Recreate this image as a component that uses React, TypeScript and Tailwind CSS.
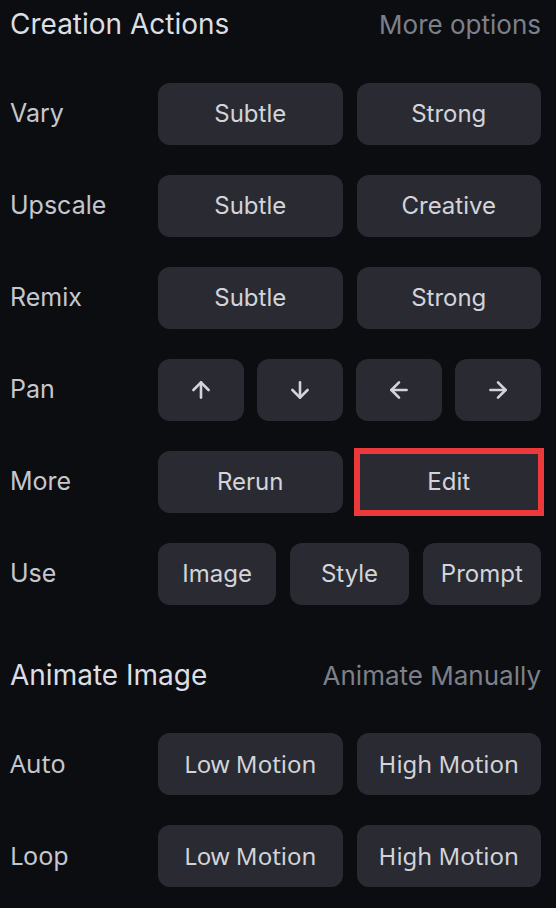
import { ArrowUp, ArrowDown, ArrowLeft, ArrowRight } from 'lucide-react';
import type { ReactNode } from 'react';

const sans = "font-['Inter','Liberation_Sans',sans-serif]";
const noto = "font-['Noto_Sans','Liberation_Sans',sans-serif]";

const Btn = ({ children, className = 'rounded-xl' }: { children: ReactNode; className?: string }) => (
    <button
        className={`h-[62px] flex-1 flex items-center justify-center bg-[#2a2b32] text-[#d2d4da] text-[24px] ${className}`}
    >
        {children}
    </button>
);

const Row = ({ label, children, font = sans }: { label: string; children: ReactNode; font?: string }) => (
    <div className="flex items-center">
        <div className={`w-[148px] text-[25px] text-[#c4c7ce] ${font}`}>{label}</div>
        <div className="flex-1 flex gap-[14px]">{children}</div>
    </div>
);

const Header = ({ title, action }: { title: string; action: string }) => (
    <div className="h-12 flex items-center justify-between">
        <h2 className="text-[28px] text-[#dcdee3]">{title}</h2>
        <span className="text-[26px] text-[#7c808a]">{action}</span>
    </div>
);

const arrow = { size: 26, strokeWidth: 2.4 };

export default function App() {
    return (
        <div className={`w-[556px] h-[908px] overflow-hidden bg-[#0c0d11] pl-[10px] pr-[15px] ${sans}`}>
            <Header title="Creation Actions" action="More options" />

            <div className="mt-[35px] flex flex-col gap-[30px]">
                <Row label="Vary">
                    <Btn>Subtle</Btn>
                    <Btn>Strong</Btn>
                </Row>
                <Row label="Upscale">
                    <Btn>Subtle</Btn>
                    <Btn>Creative</Btn>
                </Row>
                <Row label="Remix">
                    <Btn>Subtle</Btn>
                    <Btn>Strong</Btn>
                </Row>
                <Row label="Pan">
                    <div className="flex-1 flex gap-[13px]">
                        <Btn><ArrowUp {...arrow} /></Btn>
                        <Btn><ArrowDown {...arrow} /></Btn>
                        <Btn><ArrowLeft {...arrow} /></Btn>
                        <Btn><ArrowRight {...arrow} /></Btn>
                    </div>
                </Row>
                <Row label="More">
                    <Btn>Rerun</Btn>
                    <Btn className="rounded-none outline-[6px] outline-solid outline-[#ec3a3c] -outline-offset-[3px]">Edit</Btn>
                </Row>
                <Row label="Use">
                    <Btn>Image</Btn>
                    <Btn>Style</Btn>
                    <Btn>Prompt</Btn>
                </Row>
            </div>

            <div className="mt-[46px]">
                <Header title="Animate Image" action="Animate Manually" />
            </div>

            <div className="mt-[34px] flex flex-col gap-[30px]">
                <Row label="Auto" font={noto}>
                    <Btn className={`rounded-xl ${noto}`}>Low Motion</Btn>
                    <Btn className={`rounded-xl ${noto}`}>High Motion</Btn>
                </Row>
                <Row label="Loop" font={noto}>
                    <Btn className={`rounded-xl ${noto}`}>Low Motion</Btn>
                    <Btn className={`rounded-xl ${noto}`}>High Motion</Btn>
                </Row>
            </div>
        </div>
    );
}
